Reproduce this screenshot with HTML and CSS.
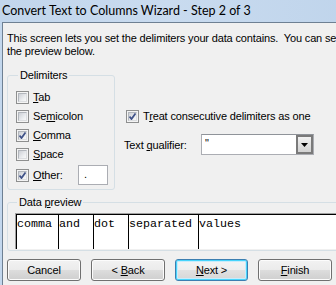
FILE: index.html
```
<!DOCTYPE html>
<html>
<head>
<meta charset="utf-8">
<link rel="stylesheet" href="styles.css">
</head>
<body>
<div class="window">
  <div class="titlebar">Convert Text to Columns Wizard - Step 2 of 3</div>
  <div class="client">
    <p class="intro">This screen lets you set the delimiters your data contains.  You can see how your text is affected in<br>the preview below.</p>
    <div class="middle">
      <fieldset class="group delims">
        <legend>Delimiters</legend>
        <div class="cb"><span class="box"></span><span><u>T</u>ab</span></div>
        <div class="cb"><span class="box"></span><span>Se<u>m</u>icolon</span></div>
        <div class="cb"><span class="box checked"></span><span><u>C</u>omma</span></div>
        <div class="cb"><span class="box"></span><span><u>S</u>pace</span></div>
        <div class="cb other"><span class="box checked"></span><span><u>O</u>ther:</span><span class="textbox">.</span></div>
      </fieldset>
      <div class="options">
        <div class="cb treat"><span class="box checked"></span><span>T<u>r</u>eat consecutive delimiters as one</span></div>
        <div class="qual">
          <span class="qlabel">Text <u>q</u>ualifier:</span>
          <div class="select"><span class="val">"</span><span class="dd"><svg width="7" height="4" viewBox="0 0 7 4"><path d="M0 0h7L3.5 4z" fill="#000"/></svg></span></div>
        </div>
      </div>
    </div>
    <fieldset class="group preview">
      <legend>Data <u>p</u>review</legend>
      <div class="pbox">
        <div class="row">
          <span class="cell w1">comma</span><span class="cell w2">and</span><span class="cell w2">dot</span><span class="cell w4">separated</span><span class="cell w5">values</span>
        </div>
      </div>
    </fieldset>
    <div class="buttons">
      <span class="btn">Cancel</span>
      <span class="btn">&lt; <u>B</u>ack</span>
      <span class="btn default"><u>N</u>ext &gt;</span>
      <span class="btn"><u>F</u>inish</span>
    </div>
  </div>
</div>
</body>
</html>
```
FILE: styles.css
```
html, body { margin: 0; padding: 0; overflow: hidden; }
body {
  width: 336px; height: 285px;
  background: #c3d7ed;
  font-family: "Liberation Sans", Arial, sans-serif;
  font-size: 11px; letter-spacing: -0.15px; color: #000;
}
.window { width: 420px; }
.titlebar {
  height: 22px; padding-left: 2px;
  font-family: Lato, "Liberation Sans", sans-serif; font-size: 12.5px; line-height: 22px; letter-spacing: 0;
  background: linear-gradient(90deg, #c2d6ec 0%, #c9dbef 40%, #bcd2ea 100%);
  color: #000;
}
.client {
  margin-left: 2px; height: 262px;
  border-top: 1px solid #6e8093; border-left: 1px solid #6e8093;
  background: #f0f0f0;
}
.intro { margin: 0; padding: 9px 0 0 4px; line-height: 13px; white-space: pre; }
.middle { display: flex; align-items: flex-start; margin-top: 11px; }
.group {
  margin: 0; border: 1px solid #d5dfe5; border-radius: 3px; padding: 0;
}
.group legend { padding: 0 2px; margin-left: 2px; line-height: 13px; }
.delims {
  margin-left: 4px; width: 108px; box-sizing: border-box;
  padding: 9px 6px 4px 8px;
  display: flex; flex-direction: column; gap: 6px;
}
.cb { display: flex; align-items: center; gap: 4px; height: 13px; line-height: 13px; white-space: nowrap; }
.cb.other { height: 20px; margin-top: -2px; }
.textbox {
  margin-left: auto; width: 30px; height: 20px; box-sizing: border-box;
  border: 1px solid #abadb3; background: #fff; padding-left: 5px; line-height: 17px;
}
.box {
  width: 13px; height: 13px; box-sizing: border-box; flex: none;
  border: 1px solid #8e8f8f; background: #f4f4f4; padding: 1px; position: relative;
}
.box::before {
  content: ""; display: block; width: 9px; height: 9px; box-sizing: border-box;
  border: 1px solid #b2b6bc; border-right-color: #dcdee1; border-bottom-color: #dcdee1;
  background: linear-gradient(135deg, #cdd0d6, #eef0f2 70%, #f8f8f8);
}
.box.checked::after {
  content: ""; position: absolute; left: 2px; top: 1px; width: 7px; height: 9px;
  background: no-repeat center/7px 7px url("data:image/svg+xml;utf8,<svg xmlns='http://www.w3.org/2000/svg' width='7' height='7' viewBox='0 0 7 7'><path d='M0.5 3.5 L2.5 6 L6.5 0.5' fill='none' stroke='%233f5288' stroke-width='1.8'/></svg>");
}
.options { margin-left: 9px; padding-top: 41px; }
.treat { margin-left: 2px; }
.qual { display: flex; align-items: center; margin-top: 11px; }
.qlabel { width: 77px; }
.select {
  width: 113px; height: 21px; box-sizing: border-box; display: flex;
  border: 1px solid #abadb3; border-top-color: #8f9399; background: #fff;
}
.select .val { flex: 1; padding-left: 3px; line-height: 17px; }
.dd {
  width: 17px; box-sizing: border-box; display: flex; align-items: center; justify-content: center;
  border: 2px solid #7a7a7a; background: linear-gradient(#f2f2f2, #e0e0e0 50%, #d2d2d2);
}
.preview {
  margin: 6px 0 0 4px; padding: 4px 0 1px 7px;
}
.pbox {
  height: 36px; box-sizing: border-box;
  border-top: 1px solid #a0a0a0; border-left: 1px solid #a0a0a0;
  background: #fff;
}
.row { display: flex; height: 100%; border-top: 1px solid #000; box-sizing: border-box;
  font-family: "Liberation Mono", "Courier New", monospace; font-size: 11.67px; line-height: 14px; letter-spacing: 0; }
.cell { border-left: 1px solid #000; padding-top: 2px; box-sizing: border-box; white-space: pre; }
.w1 { width: 42px; }
.w2 { width: 35px; }
.w4 { width: 70px; }
.w5 { width: 200px; }
.buttons { display: flex; gap: 10px; margin: 8px 0 0 4px; }
.btn {
  width: 74px; height: 22px; box-sizing: border-box; text-align: center; line-height: 20px;
  border: 1px solid #707070; border-radius: 3px;
  background: linear-gradient(#f2f2f2 0%, #ebebeb 50%, #dddddd 50%, #cfcfcf 100%);
  box-shadow: inset 0 0 0 1px #fcfcfc;
}
.btn.default {
  width: 73px; border-color: #3c7fb1;
  box-shadow: inset 0 0 0 1px #48d4fb, inset 0 0 0 2px #c8ecfb;
  background: linear-gradient(#f4f4f4 0%, #eeeeee 50%, #e2e2e2 50%, #d6d6d6 100%);
}
```
